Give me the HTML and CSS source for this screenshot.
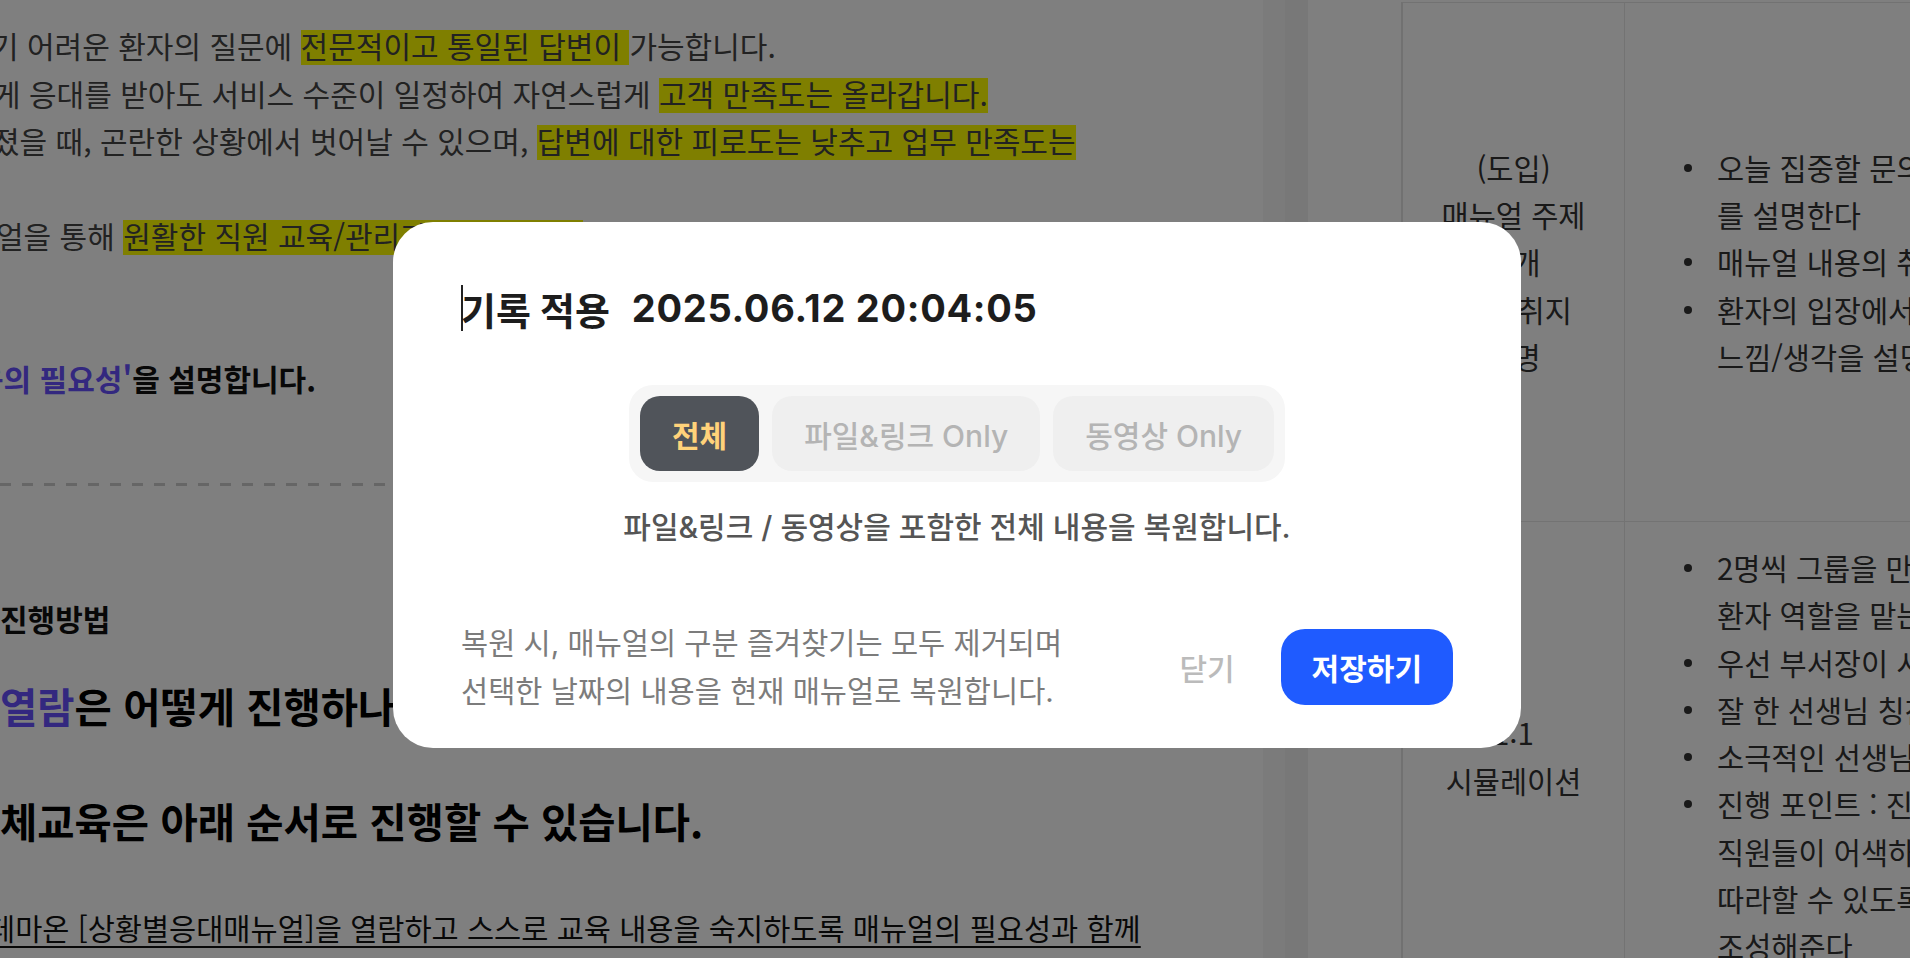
FILE: index.html
```html
<!DOCTYPE html>
<html lang="ko">
<head>
    <meta charset="UTF-8">
    <meta name="viewport" content="width=device-width, initial-scale=1.0">
    <title>매뉴얼 기록 적용</title>
    <link rel="stylesheet" href="styles.css">
</head>
<body>

    <div class="pagina">
        <div class="documento">
            <div class="linea off-9">기 어려운 환자의 질문에 <span class="resaltado">전문적이고 통일된 답변이 </span>가능합니다.</div>
            <div class="linea off-7">게 응대를 받아도 서비스 수준이 일정하여 자연스럽게 <span class="resaltado">고객 만족도는 올라갑니다.</span></div>
            <div class="linea off-8">졌을 때, 곤란한 상황에서 벗어날 수 있으며, <span class="resaltado">답변에 대한 피로도는 낮추고 업무 만족도는</span></div>
            <div class="linea vacia"></div>
            <div class="linea off-4">얼을 통해 <span class="resaltado">원활한 직원 교육/관리가 가능합니다.</span></div>

            <div class="linea destacada"><span class="morado">육의 필요성'</span>을 설명합니다.</div>

            <div class="separador"></div>

            <div class="linea subtitulo">진행방법</div>
            <h3 class="titulo-doc off-21"><span class="morado">열람</span>은 어떻게 진행하나요?</h3>
            <h3 class="titulo-doc segundo">체교육은 아래 순서로 진행할 수 있습니다.</h3>
            <div class="linea subrayada off-12">테마온 [상황별응대매뉴얼]을 열람하고 스스로 교육 내용을 숙지하도록 매뉴얼의 필요성과 함께</div>
        </div>

        <div class="canal claro"></div>
        <div class="canal oscuro"></div>

        <div class="lateral">
            <table class="tabla">
                <colgroup>
                    <col class="col-etapa">
                    <col class="col-detalle">
                </colgroup>
                <tr class="fila-alta">
                    <td class="etapa">(도입)<br>매뉴얼 주제<br>소개<br>교육 취지<br>설명</td>
                    <td class="detalle">
                        <ul class="lista">
                            <li>오늘 집중할 문의 유형과 주제<br>를 설명한다</li>
                            <li>매뉴얼 내용의 취지와 필요성을 설명한다</li>
                            <li>환자의 입장에서 느낄 수 있는<br>느낌/생각을 설명한다</li>
                        </ul>
                    </td>
                </tr>
                <tr class="fila">
                    <td class="etapa">1:1<br>시뮬레이션</td>
                    <td class="detalle">
                        <ul class="lista">
                            <li>2명씩 그룹을 만들어 직원 역할과<br>환자 역할을 맡는다</li>
                            <li>우선 부서장이 시범을 보인다</li>
                            <li>잘 한 선생님 칭찬하기</li>
                            <li>소극적인 선생님 격려하기</li>
                            <li>진행 포인트 : 진지한 분위기에서<br>직원들이 어색하지 않게<br>따라할 수 있도록 분위기를<br>조성해준다</li>
                        </ul>
                    </td>
                </tr>
            </table>
        </div>
    </div>

    <div class="fondo-modal">
        <div class="dialogo">
            <div class="titulo"><span class="cursor"></span><span class="titulo-texto">기록 적용</span><span class="fecha">2025.06.12 20:04:05</span></div>

            <div class="pestanas">
                <button class="pestana activa">전체</button>
                <button class="pestana">파일&amp;링크 Only</button>
                <button class="pestana">동영상 Only</button>
            </div>

            <p class="descripcion">파일&amp;링크 / 동영상을 포함한 전체 내용을 복원합니다.</p>

            <div class="pie">
                <p class="aviso">복원 시, 매뉴얼의 구분 즐겨찾기는 모두 제거되며<br>선택한 날짜의 내용을 현재 매뉴얼로 복원합니다.</p>
                <div class="acciones">
                    <button class="boton-cerrar">닫기</button>
                    <button class="boton-guardar">저장하기</button>
                </div>
            </div>
        </div>
    </div>

</body>
</html>
```

FILE: styles.css
```css
body {
    margin: 0;
    width: 1910px;
    height: 958px;
    overflow: hidden;
    background: #fff;
    font-family: "Noto Sans CJK KR", sans-serif;
    color: #444;
}

.pagina {
    display: flex;
    height: 958px;
}

/* Documento de la izquierda */
.documento {
    width: 1263px;
    flex-shrink: 0;
    padding-top: 22px;
    font-size: 30px;
    line-height: 47.5px;
    overflow: hidden;
}

.linea {
    white-space: nowrap;
}

.vacia {
    height: 47.5px;
}

.off-4 { margin-left: -4px; }
.off-7 { margin-left: -7px; }
.off-8 { margin-left: -8px; }
.off-9 { margin-left: -9px; }
.off-12 { margin-left: -12px; }
.off-21 { margin-left: -21px; }

.resaltado {
    background: linear-gradient(transparent 17%, #ffff00 17%, #ffff00 96%, transparent 96%);
}

.morado {
    color: #6650ff;
}

.destacada {
    margin-top: 95px;
    margin-left: -24px;
    font-weight: 700;
    color: #111;
}

.separador {
    margin-top: 81px;
    width: 1180px;
    height: 3px;
    background: repeating-linear-gradient(to right, #cccccc 0 11px, transparent 11px 22px);
}

.subtitulo {
    margin-top: 109px;
    font-weight: 700;
    color: #111;
}

.titulo-doc {
    margin: 37px 0 0;
    font-size: 40.5px;
    line-height: 52px;
    font-weight: 700;
    color: #000;
    white-space: nowrap;
}

.titulo-doc.segundo {
    margin-top: 63px;
}

.subrayada {
    margin-top: 57px;
    font-size: 29.5px;
    color: #111;
    text-decoration: underline;
    text-underline-offset: 6px;
}

/* Canales entre columnas */
.canal {
    flex-shrink: 0;
}

.canal.claro {
    width: 22px;
    background: #f6f6f6;
}

.canal.oscuro {
    width: 23px;
    background: #f0f0f0;
}

/* Tabla de la derecha */
.lateral {
    flex: 1;
    padding: 2px 0 0 93px;
    overflow: hidden;
}

.tabla {
    table-layout: fixed;
    width: 924px;
    border-collapse: separate;
    border-spacing: 0;
    border-top: 1px solid #e4e4e4;
    border-left: 2px solid #e2e2e2;
    font-size: 29.5px;
    line-height: 47.25px;
    color: #333;
}

.col-etapa {
    width: 222px;
}

.col-detalle {
    width: 700px;
}

.tabla td {
    border-right: 1px solid #e6e6e6;
    border-bottom: 1px solid #e6e6e6;
    vertical-align: middle;
    padding: 22px 0;
}

.fila-alta td {
    height: 518px;
    padding: 0;
}

.etapa {
    text-align: center;
    white-space: nowrap;
}

.lista {
    list-style: none;
    margin: 0;
    padding: 0 0 0 92px;
    white-space: nowrap;
}

.lista li {
    position: relative;
}

.lista li::before {
    content: "";
    position: absolute;
    left: -33px;
    top: 20px;
    width: 8px;
    height: 8px;
    border-radius: 50%;
    background: #333;
}

/* Ventana modal */
.fondo-modal {
    position: fixed;
    inset: 0;
    background: rgba(0, 0, 0, 0.5);
    display: flex;
    justify-content: center;
    align-items: center;
    padding: 12px 0 0 4px;
    box-sizing: border-box;
}

.dialogo {
    width: 1128px;
    box-sizing: border-box;
    padding: 63px 68px 33px;
    background: #fff;
    border-radius: 40px;
    font-family: "Inter", "Noto Sans CJK KR", sans-serif;
}

.titulo {
    display: flex;
    align-items: center;
    height: 46px;
    font-size: 38px;
    font-weight: 700;
    color: #1d1d1d;
    white-space: nowrap;
}

.cursor {
    width: 2px;
    height: 46px;
    background: #222;
    margin-right: -2px;
}

.fecha {
    margin-left: 22px;
    letter-spacing: 0.7px;
}

.pestanas {
    display: flex;
    gap: 13px;
    width: fit-content;
    margin: 54px auto 0;
    padding: 11px;
    background: #f6f6f6;
    border-radius: 24px;
}

.pestana {
    font: inherit;
    font-size: 30px;
    font-weight: 500;
    height: 75px;
    padding: 0 32px;
    border: 0;
    border-radius: 20px;
    background: #efefef;
    color: #b4b4b4;
    cursor: pointer;
}

.pestana.activa {
    background: #50545a;
    color: #ffd27a;
    font-weight: 700;
}

.descripcion {
    margin: 23px 0 0;
    text-align: center;
    font-size: 30px;
    line-height: 44px;
    font-weight: 500;
    color: #555;
}

.pie {
    margin-top: 70px;
    display: flex;
    justify-content: space-between;
    align-items: center;
}

.aviso {
    margin: 0;
    font-size: 29.5px;
    line-height: 48px;
    color: #7c7c7c;
}

.acciones {
    display: flex;
    align-items: center;
    gap: 46px;
}

.boton-cerrar {
    font: inherit;
    font-size: 30px;
    font-weight: 500;
    padding: 0;
    border: 0;
    background: none;
    color: #bbb;
    cursor: pointer;
}

.boton-guardar {
    font: inherit;
    font-size: 30px;
    font-weight: 700;
    height: 76px;
    padding: 0 31px;
    border: 0;
    border-radius: 24px;
    background: #1f5bff;
    color: #fff;
    cursor: pointer;
}
```
